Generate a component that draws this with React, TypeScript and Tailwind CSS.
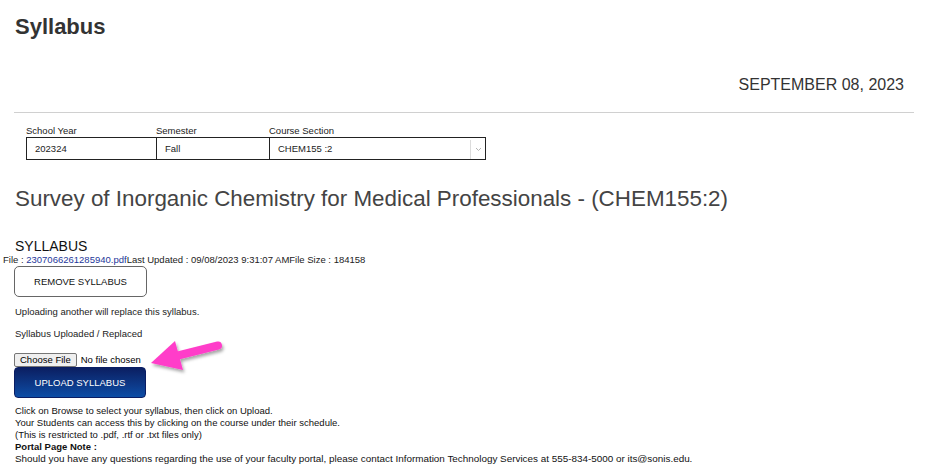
import React from 'react';

function Chevron() {
  return (
    <svg width="7" height="5" viewBox="0 0 7 5" className="block">
      <path d="M1 1 L3.5 3.5 L6 1" fill="none" stroke="#b5b5b5" strokeWidth="1" />
    </svg>
  );
}

function PinkArrow() {
  // the callout arrow that someone drew over the screenshot
  return (
    <svg className="absolute left-[140px] top-[330px] pointer-events-none" width="100" height="50" viewBox="140 330 100 50">
      <defs>
        <filter id="shadow" x="-20%" y="-20%" width="150%" height="160%">
          <feDropShadow dx="1.5" dy="2.5" stdDeviation="1.6" floodColor="#000" floodOpacity="0.35" />
        </filter>
      </defs>
      <g filter="url(#shadow)">
        <line x1="218" y1="345.5" x2="172" y2="357" stroke="#ff3ec9" strokeWidth="8" strokeLinecap="round" />
        <polygon points="151,363 175,341 183,370" fill="#ff3ec9" />
      </g>
    </svg>
  );
}

export default function App() {
  return (
    <div className="relative w-[926px] h-[472px] overflow-hidden bg-white font-['Liberation_Sans',Arial,sans-serif] text-[#222]">
      <h1 className="pl-[15px] pt-[15px] text-[22px] leading-[24px] font-bold text-[#333]">Syllabus</h1>

      <div className="mt-[37px] pr-[22px] text-right text-[16px] leading-[18px] text-[#333]">SEPTEMBER 08, 2023</div>

      <div className="mt-[18px] ml-[14px] mr-[12px] h-px bg-[#d0d0d0]" />

      {/* selectors */}
      <div className="mt-[12px] ml-[26px] flex text-[9.5px] leading-[12px]">
        <div className="flex flex-col w-[131px]">
          <span>School Year</span>
          <div className="h-[23px] border border-[#222] flex items-center pl-[8px] pt-px">202324</div>
        </div>
        <div className="flex flex-col w-[114px] -ml-px">
          <span>Semester</span>
          <div className="h-[23px] border border-[#222] flex items-center pl-[8px] pt-px">Fall</div>
        </div>
        <div className="flex flex-col w-[217px] -ml-px">
          <span>Course Section</span>
          <div className="h-[23px] border border-[#222] flex items-center pl-[8px] pt-px">
            <span className="flex-1">CHEM155 :2</span>
            <div className="h-[19px] w-[15px] border-l border-[#dcdcdc] flex items-center justify-center">
              <Chevron />
            </div>
          </div>
        </div>
      </div>

      <h2 className="mt-[26px] pl-[15px] text-[22.4px] leading-[26px] text-[#444]">
        Survey of Inorganic Chemistry for Medical Professionals - (CHEM155:2)
      </h2>

      <div className="mt-[26px] pl-[15px] text-[14px] leading-[16px] text-[#111]">SYLLABUS</div>

      <div className="pl-[3px] text-[9.5px] leading-[12px]">
        File : <span className="text-[#24379a]">2307066261285940.pdf</span>Last Updated : 09/08/2023 9:31:07 AMFile Size : 184158
      </div>

      <div className="ml-[14px] w-[133px] h-[31px] rounded-[5px] border border-[#666] flex items-center justify-center text-[9.5px] leading-[12px] text-[#111]">
        REMOVE SYLLABUS
      </div>

      <div className="mt-[9px] pl-[15px] text-[9.5px] leading-[12px]">Uploading another will replace this syllabus.</div>
      <div className="mt-[10px] pl-[15px] text-[9.5px] leading-[12px]">Syllabus Uploaded / Replaced</div>

      <div className="mt-[12px] ml-[14px] h-[15px] flex items-center text-[9.5px] leading-[12px] text-black">
        <span className="h-[14px] px-[5px] flex items-center bg-[#efefef] border border-[#767676] rounded-[2px]">Choose File</span>
        <span className="ml-[4px]">No file chosen</span>
      </div>

      <div className="ml-[14px] w-[132px] h-[31px] rounded-[4px] border border-[#0a1d63] bg-gradient-to-b from-[#0b1f62] to-[#0c4da6] flex items-center justify-center text-white text-[9.5px] leading-[12px]">
        UPLOAD SYLLABUS
      </div>

      <div className="mt-[7px] pl-[15px] text-[9.5px] leading-[12px] text-[#111]">
        <p>Click on Browse to select your syllabus, then click on Upload.</p>
        <p>Your Students can access this by clicking on the course under their schedule.</p>
        <p>(This is restricted to .pdf, .rtf or .txt files only)</p>
        <p className="font-bold">Portal Page Note :</p>
        <p className="text-[9.9px]">Should you have any questions regarding the use of your faculty portal, please contact Information Technology Services at 555-834-5000 or its@sonis.edu.</p>
      </div>

      <PinkArrow />
    </div>
  );
}
